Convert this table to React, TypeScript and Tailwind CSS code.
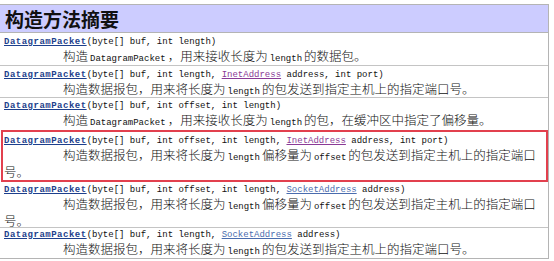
import React from "react";

const mono = "font-['Liberation_Mono','DejaVu_Sans_Mono',monospace] text-[9px]";
const cjk = "font-['Noto_Sans_CJK_SC','Noto_Sans',sans-serif]";

function C({ children }: { children: React.ReactNode }) {
  return <span className={`${mono} font-normal mx-[2px]`}>{children}</span>;
}

function Sig({ children }: { children: React.ReactNode }) {
  return (
    <div className={`${mono} leading-[13px] h-[13px] whitespace-nowrap text-[#111]`}>
      <span className="font-bold underline text-[#1d3f8c] tracking-[0.5px]">DatagramPacket</span>
      {children}
    </div>
  );
}

function Desc({ children }: { children: React.ReactNode }) {
  return (
    <div className={`${cjk} font-light text-[12.5px] leading-[13px] indent-[59px] whitespace-nowrap text-[#111]`}>
      {children}
    </div>
  );
}

const inet = <span className="underline text-[#8a3a96]">InetAddress</span>;
const sock = <span className="underline text-[#4a6cae]">SocketAddress</span>;

export default function App() {
  return (
    <div className="w-[554px] h-[261px] bg-white overflow-hidden">
      <div className="mt-[4px] w-[549px] border-t border-r border-[#b4b4b4]">
        <div className="h-[28px] bg-[#ccccff] border-b border-[#b4b4b4] flex items-center pl-[5px]">
          <span className={`${cjk} font-bold text-[19px] leading-none text-[#111]`}>构造方法摘要</span>
        </div>

        <div className="h-[33px] border-b border-[#c4c4c4] pl-[4px] pt-[3px]">
          <Sig>(byte[] buf, int length)</Sig>
          <Desc>
            构造<C>DatagramPacket</C>，用来接收长度为<C>length</C>的数据包。
          </Desc>
        </div>

        <div className="h-[32px] border-b border-[#c4c4c4] pl-[4px] pt-[3px]">
          <Sig>(byte[] buf, int length, {inet} address, int port)</Sig>
          <Desc>
            构造数据报包，用来将长度为<C>length</C>的包发送到指定主机上的指定端口号。
          </Desc>
        </div>

        <div className="h-[32px] pl-[4px] pt-[2px]">
          <Sig>(byte[] buf, int offset, int length)</Sig>
          <Desc>
            构造<C>DatagramPacket</C>，用来接收长度为<C>length</C>的包，在缓冲区中指定了偏移量。
          </Desc>
        </div>

        <div className="h-[52px] ml-[1px] border-2 border-[#e2404e] pl-[1px] pt-[3px]">
          <Sig>(byte[] buf, int offset, int length, {inet} address, int port)</Sig>
          <Desc>
            构造数据报包，用来将长度为<C>length</C>偏移量为<C>offset</C>的包发送到指定主机上的指定端口
            <br />
            号。
          </Desc>
        </div>

        <div className="h-[46px] border-b border-[#c4c4c4] pl-[4px] pt-[1.5px]">
          <Sig>(byte[] buf, int offset, int length, {sock} address)</Sig>
          <Desc>
            构造数据报包，用来将长度为<C>length</C>偏移量为<C>offset</C>的包发送到指定主机上的指定端口
            <br />
            号。
          </Desc>
        </div>

        <div className="h-[31px] border-b border-[#b4b4b4] pl-[4px] pt-[0.5px]">
          <Sig>(byte[] buf, int length, {sock} address)</Sig>
          <Desc>
            构造数据报包，用来将长度为<C>length</C>的包发送到指定主机上的指定端口号。
          </Desc>
        </div>
      </div>
    </div>
  );
}
